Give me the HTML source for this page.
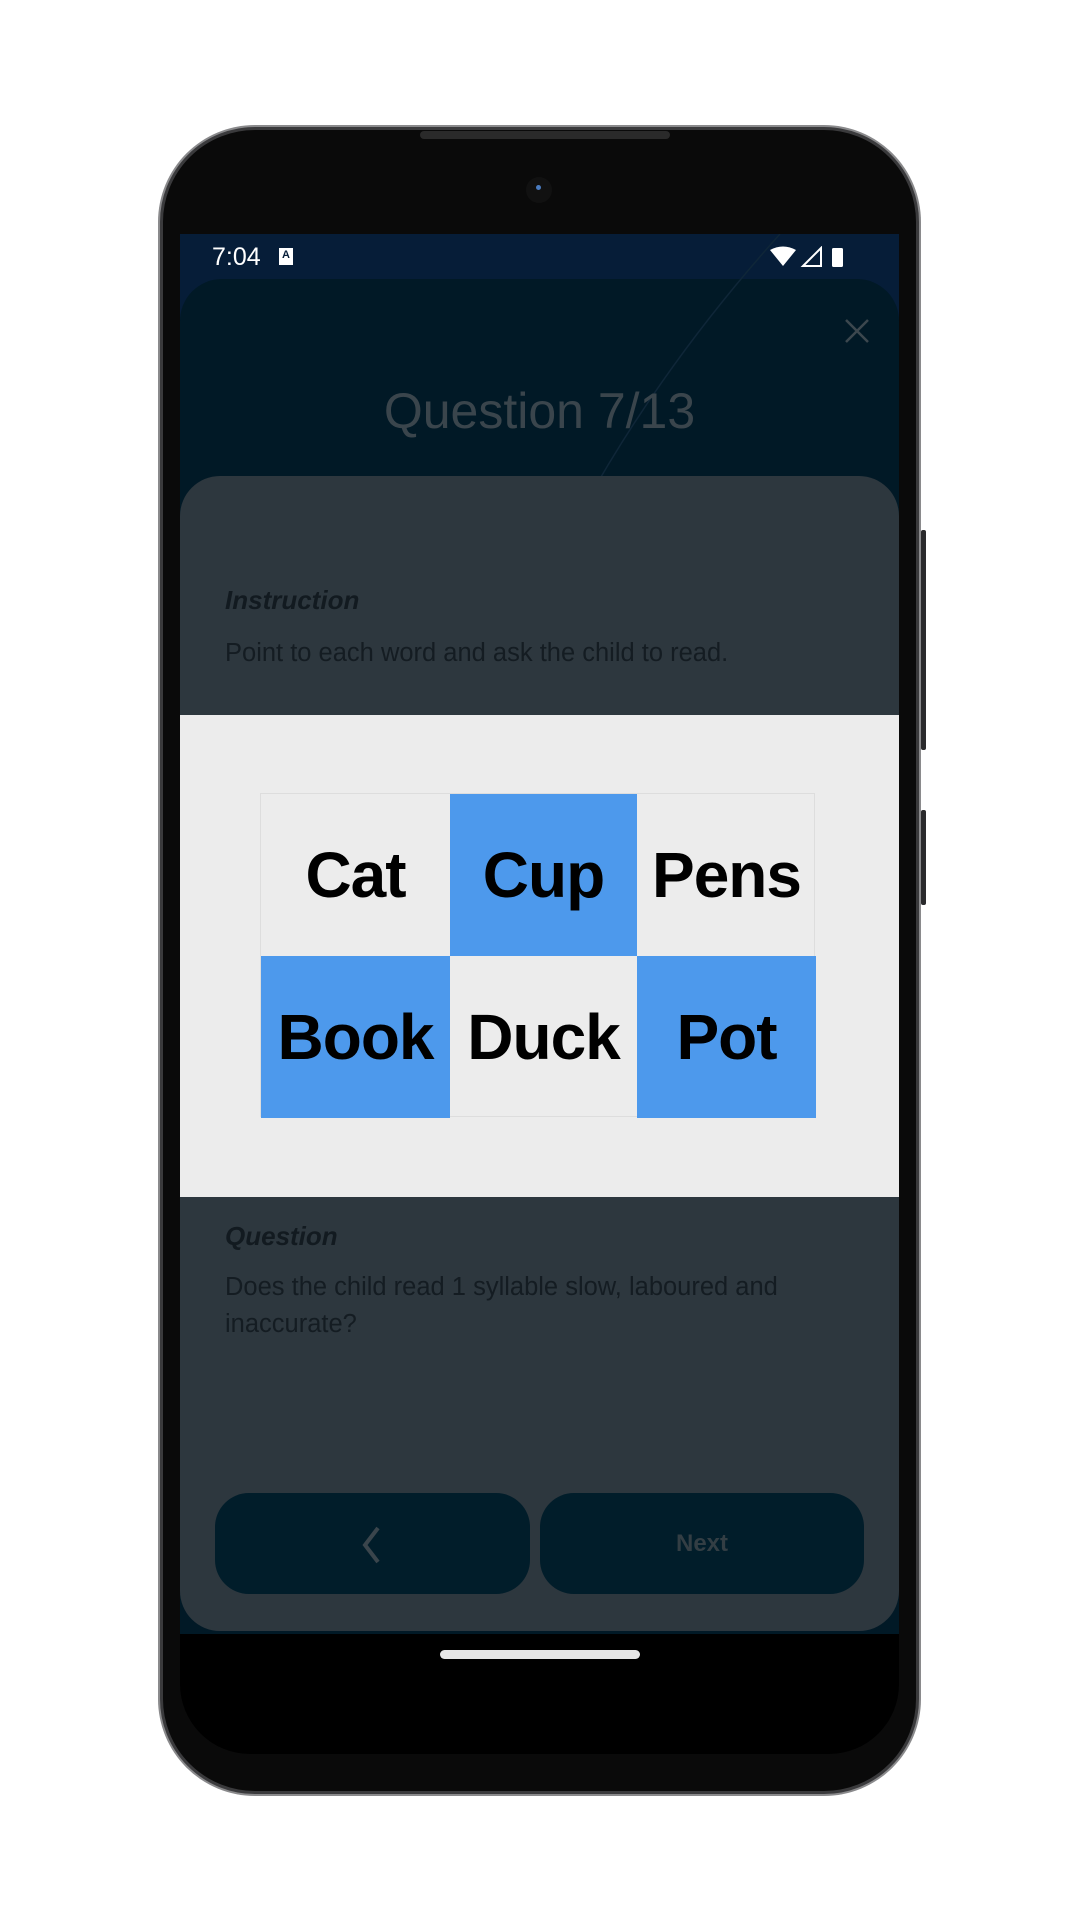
<!DOCTYPE html>
<html><head><meta charset="utf-8"><style>
*{margin:0;padding:0;box-sizing:border-box}
html,body{width:1080px;height:1920px;background:#fff;overflow:hidden;font-family:"Liberation Sans",sans-serif}
.phone{position:absolute;left:160px;top:127px;width:759px;height:1667px;border-radius:95px;background:#0a0a0a;border:3px solid #3a3a3c;box-shadow:0 0 0 2px #8a8a8c}
.screen{position:absolute;left:180px;top:234px;width:719px;height:1400px;overflow:hidden;background:#061d38}
.status{position:absolute;left:0;top:0;width:719px;height:50px;color:#fff;font-size:25px}
.dark{position:absolute;left:0;top:45px;width:719px;height:1400px;background:#011926;border-radius:42px 42px 0 0}
.grey{position:absolute;left:0;top:242px;width:719px;height:1155px;background:#2d373e;border-radius:40px}
.title{position:absolute;left:0;top:148px;width:719px;text-align:center;color:#3a454c;font-size:50px}
.white{position:absolute;left:0;top:481px;width:719px;height:482px;background:#ececec}
.grid{position:absolute;left:80px;top:78px;width:555px;height:324px;display:grid;grid-template-columns:189px 187px 179px;grid-template-rows:162px 162px;border:1px solid #ddd}
.grid div{display:flex;align-items:center;justify-content:center;font-weight:bold;font-size:64px;color:#000;letter-spacing:-1px}
.b{background:#4d99ec}
.lbl{position:absolute;left:45px;font-style:italic;font-weight:bold;font-size:26px;color:#121a20}
.txt{position:absolute;left:45px;font-size:25.5px;color:#141c22;line-height:37px}
.btn{position:absolute;top:1259px;height:101px;background:#011d2a;border-radius:34px}
</style></head><body>
<div class="phone"></div>
<div style="position:absolute;left:420px;top:131px;width:250px;height:8px;background:#2a2a2a;border-radius:4px"></div>
<div style="position:absolute;left:526px;top:177px;width:26px;height:26px;border-radius:50%;background:#111"><div style="position:absolute;left:10px;top:8px;width:5px;height:5px;border-radius:50%;background:#4a7cc0"></div></div>
<div style="position:absolute;left:921px;top:530px;width:5px;height:220px;background:#2a2a2c;border-radius:2px"></div>
<div style="position:absolute;left:921px;top:810px;width:5px;height:95px;background:#2a2a2c;border-radius:2px"></div>
<div class="screen">
  <div style="position:absolute;left:0;top:1300px;width:719px;height:100px;background:#6b6b6b"></div>
  <div class="dark"></div>
  <svg style="position:absolute;left:0;top:0" width="719" height="500"><path d="M600 0 Q420 200 330 430" stroke="#0f2638" stroke-width="1.5" fill="none"/><path d="M200 440 Q360 330 520 440" stroke="#0d2233" stroke-width="1.5" fill="none"/></svg>
  <div class="status">
    <span style="position:absolute;left:32px;top:9px">7:04</span>
    <div style="position:absolute;left:99px;top:14px;width:14px;height:17px;background:#fff;color:#061d38;font-size:11px;font-weight:bold;text-align:center;line-height:15px">A</div>
    <svg style="position:absolute;left:590px;top:12px" width="80" height="24"><path d="M0 4 Q13 -3 26 4 L13 20Z" fill="#fff"/><path d="M33 20 L51 2 L51 20Z" fill="none" stroke="#fff" stroke-width="2"/><rect x="62" y="2" width="11" height="19" rx="1.5" fill="#fff"/></svg>
  </div>
  <svg style="position:absolute;left:664px;top:84px" width="26" height="26"><path d="M2 2L24 24M24 2L2 24" stroke="#3c474e" stroke-width="2.5"/></svg>
  <div class="title">Question 7/13</div>
  <div class="grey">
    <div class="lbl" style="top:109px">Instruction</div>
    <div class="txt" style="top:159px">Point to each word and ask the child to read.</div>
    <div class="lbl" style="top:745px">Question</div>
    <div class="txt" style="top:793px">Does the child read 1 syllable slow, laboured and<br>inaccurate?</div>
  </div>
  <div class="white">
    <div class="grid">
      <div>Cat</div><div class="b">Cup</div><div>Pens</div>
      <div class="b">Book</div><div>Duck</div><div class="b">Pot</div>
    </div>
  </div>
  <div class="btn" style="left:35px;width:315px"><svg style="position:absolute;left:143px;top:32px" width="30" height="40"><path d="M20 3 L7 20 L20 37" stroke="#3a454c" stroke-width="4" fill="none"/></svg></div>
  <div class="btn" style="left:360px;width:324px;text-align:center;line-height:101px;font-weight:bold;font-size:24px;color:#333e44">Next</div>
</div>
<div style="position:absolute;left:180px;top:1634px;width:719px;height:120px;background:#000;border-radius:0 0 70px 70px"></div>
<div style="position:absolute;left:440px;top:1650px;width:200px;height:9px;background:#e6e6e6;border-radius:5px"></div>
</body></html>
